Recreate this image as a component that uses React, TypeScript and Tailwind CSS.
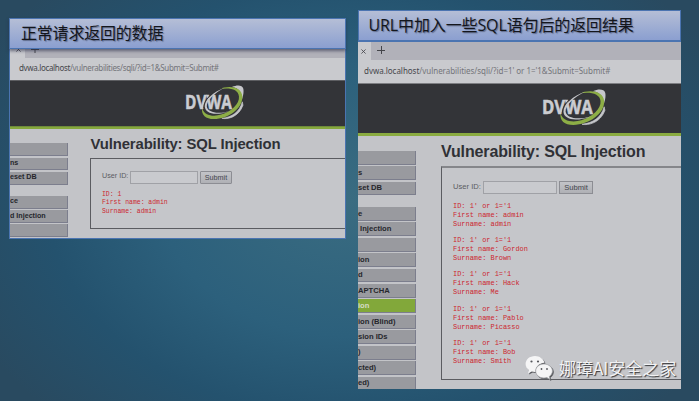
import React from "react";

type NavItem = { label: string; active?: boolean; gapAfter?: boolean };

function DvwaLogo({ className }: { className: string }) {
  return (
    <svg viewBox="0 0 176 104" className={className} preserveAspectRatio="none">
      <path d="M140 6 C156 -1 171 0 174 11 C176 22 173 34 170 42 C169 22 160 9 140 6 Z" fill="#c6c7cb" />
      <path d="M171 50 C163 80 140 96 110 99 C126 103 160 96 173 60 Z" fill="#c6c7cb" stroke="#c6c7cb" strokeWidth="2" />
      <path
        d="M102 12 C134 0 169 6 171 34 C173 69 129 101 86 101 C62 101 48 89 51 68 C57 91 84 95 108 88 C139 78 163 56 161 34 C159 12 134 7 102 12 Z"
        fill="#8dae46"
      />
      <text
        x="0"
        y="71"
        fontFamily="'Open Sans', 'Noto Sans', sans-serif"
        fontWeight="700"
        fontSize="56"
        textLength="140"
        lengthAdjust="spacingAndGlyphs"
        fill="#cbccd1"
        stroke="#cbccd1"
        strokeWidth="1.5"
      >
        DVWA
      </text>
      <path d="M112 8 C80 22 56 44 56 68" fill="none" stroke="#333438" strokeWidth="3" />
      <path d="M118 8 C86 20 59 42 59 64 C60 84 90 94 134 77 C98 88 68 82 65 64 C64 46 88 24 118 8 Z" fill="#c6c7cb" />
    </svg>
  );
}

function Nav({ items, className, itemClass, gapClass }: { items: NavItem[]; className: string; itemClass: string; gapClass: string }) {
  return (
    <nav className={`shrink-0 overflow-hidden font-bold whitespace-nowrap ${className}`}>
      {items.map((item, i) => (
        <div key={i} className={item.gapAfter ? gapClass : ""}>
          <div
            className={`flex items-center border-r border-b border-[#7c7e8d] ${
              item.active ? "bg-[#82a83a] text-[#d5dcc8]" : "bg-[#999a9f] text-[#26272c]"
            } ${itemClass}`}
          >
            {item.label}
          </div>
        </div>
      ))}
    </nav>
  );
}

const leftNav: NavItem[] = [
  { label: "" },
  { label: "ns" },
  { label: "eset DB", gapAfter: true },
  { label: "ce" },
  { label: "d Injection" },
  { label: "" },
];

const rightNav: NavItem[] = [
  { label: "" },
  { label: "s" },
  { label: "set DB", gapAfter: true },
  { label: "e" },
  { label: "\u00a0Injection" },
  { label: "" },
  { label: "ion" },
  { label: "d" },
  { label: "APTCHA" },
  { label: "ion", active: true },
  { label: "ion (Blind)" },
  { label: "sion IDs" },
  { label: ")" },
  { label: "cted)" },
  { label: "ed)" },
];

const users = [
  ["admin", "admin"],
  ["Gordon", "Brown"],
  ["Hack", "Me"],
  ["Pablo", "Picasso"],
  ["Bob", "Smith"],
];

function LeftPanel() {
  return (
    <section className="mt-[18px] flex h-[221px] w-[337px] shrink-0 flex-col">
      <h2 className="z-10 flex h-[31px] shrink-0 items-center border border-[#4b74b1] bg-linear-to-b from-[#b5bed6] to-[#8b9fd0] pb-[1px] pl-[11px] font-['Open_Sans','Noto_Sans_CJK_SC',sans-serif] text-[16px] tracking-[-0.2px] text-[#14161c] shadow-[0_2px_3px_rgba(40,45,70,0.6)] [text-shadow:1px_1px_1px_rgba(40,45,70,0.5)]">
        正常请求返回的数据
      </h2>
      <div className="flex min-h-0 flex-1 flex-col overflow-hidden border-x border-b border-[#4b74b1] bg-[#c3c4c8]">
        <div className="flex h-[9px] shrink-0 overflow-hidden bg-[#b1b1b9] text-[#44454a]">
          <div className="w-[15px] bg-[#c9cace] pl-[6px]">
            <svg viewBox="0 0 6 6" className="mt-[-2px] size-[5px]" stroke="currentColor"><path d="M.5 .5 5.5 5.5M5.5 .5 .5 5.5" /></svg>
          </div>
          <svg viewBox="0 0 8 8" className="mt-[-4px] ml-[6px] size-[8px]" stroke="currentColor"><path d="M4 0V8M0 4.5H8" /></svg>
        </div>
        <div className="flex h-[22px] shrink-0 items-center bg-[#c9cace] pb-[2px] pl-[9px] font-['Noto_Sans',sans-serif] text-[8px] tracking-[-0.34px] whitespace-nowrap text-[#74757a]">
          <span className="text-[#46474c]">dvwa.localhost</span>/vulnerabilities/sqli/?id=1&amp;Submit=Submit#
        </div>
        <div className="flex h-[46px] shrink-0 border-t border-[#5d5e62] bg-[#333438]">
          <DvwaLogo className="mt-[4px] ml-[175px] h-[35px] w-[59px]" />
        </div>
        <div className="h-[3px] shrink-0 border-t border-[#6f8a3c] bg-[#86a83c]" />
        <div className="flex min-h-0 flex-1">
          <Nav items={leftNav} className="w-[58px] pt-[14.3px] text-[7.15px]" itemClass="mb-[1.6px] h-[12.7px]" gapClass="pb-[9.7px]" />
          <main className="ml-[22px] flex-1">
            <h1 className="mt-[6px] h-[23px] pl-[0.5px] text-[14.9px] leading-[19px] font-bold tracking-[-0.13px] whitespace-nowrap text-[#303136]">Vulnerability: SQL Injection</h1>
            <div className="h-[71px] border border-r-0 border-[#5b5c61] bg-[#c5c6ca] pt-[12px] pl-[11px]">
              <div className="flex h-[13px] items-center text-[7.2px] whitespace-nowrap text-[#5b5c62]">
                <span className="w-[28px] pb-[2px]">User ID:</span>
                <span className="h-[13px] w-[68px] border border-[#a0a1a6] bg-[#c9cace]" />
                <button className="ml-[2px] h-[13px] w-[32px] rounded-[1px] border border-[#8c8d93] bg-linear-to-b from-[#c3c4c8] to-[#afb0b5] text-[7.2px] leading-[10px] text-[#44454d]">Submit</button>
              </div>
              <pre className="mt-[7px] font-['Liberation_Mono',monospace] text-[6.45px] leading-[8.4px] text-[#cc2630]">{"ID: 1\nFirst name: admin\nSurname: admin"}</pre>
            </div>
          </main>
        </div>
      </div>
    </section>
  );
}

function RightPanel() {
  return (
    <section className="mt-[10px] flex h-[379px] w-[323px] shrink-0 flex-col overflow-hidden bg-[#c3c4c8]">
      <h2 className="flex h-[32px] shrink-0 items-center border border-b-2 border-[#4b74b1] bg-linear-to-b from-[#b5bed6] to-[#8b9fd0] pb-[1px] pl-[9.5px] font-['Open_Sans','Noto_Sans_CJK_SC',sans-serif] text-[16px] tracking-[-0.12px] whitespace-nowrap text-[#14161c] [text-shadow:1px_1px_1px_rgba(40,45,70,0.5)]">
        URL中加入一些SQL语句后的返回结果
      </h2>
      <div className="flex h-[18px] shrink-0 bg-[#b1b1b9] text-[#44454a]">
        <div className="flex w-[13px] items-center bg-[#c9cace] pl-[3px]">
          <svg viewBox="0 0 6 6" className="size-[5px]" stroke="currentColor"><path d="M.5 .5 5.5 5.5M5.5 .5 .5 5.5" /></svg>
        </div>
        <svg viewBox="0 0 8 8" className="mt-[4px] ml-[6px] size-[8px]" stroke="currentColor"><path d="M4.5 0V8M0 4.5H8" /></svg>
      </div>
      <div className="flex h-[23px] shrink-0 items-center bg-[#c9cace] pb-[1px] pl-[6px] font-['Noto_Sans',sans-serif] text-[8px] tracking-[-0.03px] whitespace-pre text-[#74757a]">
        <span className="text-[#46474c]">dvwa.localhost</span>/vulnerabilities/sqli/?id=1' or 1='1&amp;Submit=Submit#
      </div>
      <div className="flex h-[50px] shrink-0 border-t border-[#7d7e82] bg-[#333438]">
        <DvwaLogo className="mt-[5px] ml-[184px] h-[37px] w-[64px]" />
      </div>
      <div className="h-[3px] shrink-0 bg-[#8aab40]" />
      <div className="flex min-h-0 flex-1">
        <Nav items={rightNav} className="w-[58px] pt-[14.7px] text-[7.6px]" itemClass="mb-[1.6px] h-[13.83px]" gapClass="pb-[10px]" />
        <main className="ml-[25px] flex-1">
          <h1 className="mt-[6px] h-[24px] text-[16px] leading-[20px] font-bold tracking-[-0.13px] whitespace-nowrap text-[#303136]">Vulnerability: SQL Injection</h1>
          <div className="h-[214px] border border-t-2 border-r-0 border-[#5b5c61] border-t-[#85868a] bg-[#c5c6ca] pt-[13px] pl-[11px]">
            <div className="flex h-[13px] items-center text-[7.6px] whitespace-nowrap text-[#5b5c62]">
              <span className="w-[30px] pb-[2px]">User ID:</span>
              <span className="h-[13px] w-[74px] border border-[#a0a1a6] bg-[#c9cace]" />
              <button className="ml-[2px] h-[13px] w-[34px] border border-[#8c8d93] bg-linear-to-b from-[#c3c4c8] to-[#afb0b5] text-[7.6px] leading-[10px] text-[#44454d]">Submit</button>
            </div>
            <div className="mt-[7.5px] flex flex-col gap-[7.4px]">
              {users.map(([first, last]) => (
                <pre key={first} className="font-['Liberation_Mono',monospace] text-[6.95px] leading-[9px] text-[#cc2630]">{`ID: 1' or 1='1\nFirst name: ${first}\nSurname: ${last}`}</pre>
              ))}
            </div>
          </div>
        </main>
      </div>
    </section>
  );
}

export default function App() {
  return (
    <div className="relative flex h-[401px] w-[699px] gap-[12px] overflow-hidden bg-[radial-gradient(ellipse_60%_75%_at_50%_50%,#3a6c81_0%,#2c607c_45%,#24526e_72%,#294a60_100%)] pl-[9px] font-['Liberation_Sans',Arial,sans-serif]">
      <LeftPanel />
      <RightPanel />
      <div className="absolute top-[355px] left-[525px] flex items-center">
        <svg viewBox="0 0 28 26" className="h-[26px] w-[28px] drop-shadow-[1px_1px_0px_#55565b]">
          <path d="M10 1C4.500 1 .6 4.600 .6 9c0 2.600 1.300 4.700 3.400 6.200L3 18.500l3.800-1.900c1.200.4 2.500.5 3.900.4C10 12 14 8 19.500 7.700 18.500 3.800 14.600 1 10 1Z" fill="#f5f5f6" />
          <path d="M19 9c-4.800 0-8.300 3.100-8.300 7s3.500 7 8.300 7c1 0 2-.2 2.900-.4l3.100 1.800-.8-2.900c2-1.300 3.200-3.300 3.200-5.500 0-3.900-3.800-7-8.400-7Z" fill="#f5f5f6" stroke="#a5a6aa" strokeWidth=".7" />
          <g fill="#55565b"><circle cx="6.500" cy="6.500" r="1.100" /><circle cx="13" cy="6.500" r="1.100" /><circle cx="16.500" cy="14" r=".9" /><circle cx="22" cy="14" r=".9" /></g>
        </svg>
        <span className="ml-[6px] font-['Noto_Sans_CJK_SC',sans-serif] text-[17px] leading-[26px] whitespace-nowrap text-[#f2f2f4] [text-shadow:1px_1px_1px_#333438]">娜璋AI安全之家</span>
      </div>
    </div>
  );
}
